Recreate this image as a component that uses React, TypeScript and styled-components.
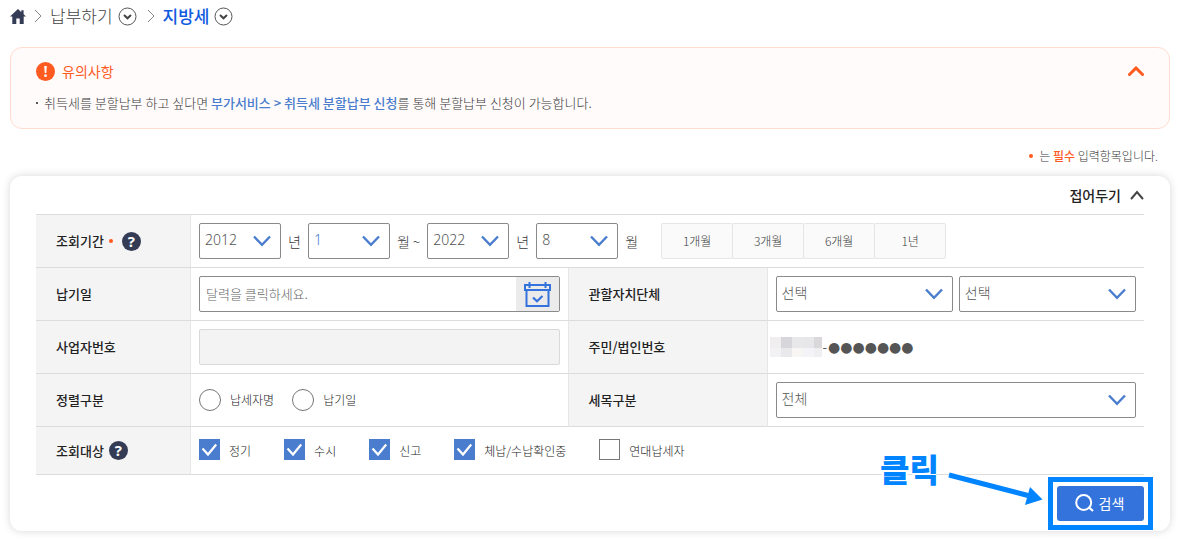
import React, { useState } from "react";
import styled, { createGlobalStyle, css } from "styled-components";

const color = {
  text: "#3a3a3a",
  strong: "#222",
  line: "#dcdcdc",
  field: "#8a8a8a",
  blue: "#4a7dce",
  primary: "#3573dc",
  navy: "#343b54",
  orange: "#ff5a1f",
  mark: "#0084ff",
};

const GlobalStyle = createGlobalStyle`
  *, *::before, *::after { box-sizing: border-box; }
  body {
    margin: 0;
    background: #fff;
    color: ${color.text};
    font: 300 13px/20px "Noto Sans CJK KR", "Noto Sans", sans-serif;
  }
  button, input, select { font: inherit; color: inherit; margin: 0; }
  button { cursor: pointer; }
  svg { display: block; flex: none; }
`;

const Page = styled.main`
  padding: 0 11px 12px 10px;
`;

/* Breadcrumb */

const Breadcrumb = styled.nav`
  display: flex;
  align-items: center;
  gap: 8px;
  height: 32px;
  margin-bottom: 15px;
`;

const CrumbLink = styled.a<{ $current?: boolean }>`
  font-size: 17px;
  line-height: 24px;
  text-decoration: none;
  color: ${(p) => (p.$current ? "#0f5be0" : "#444")};
  font-weight: ${(p) => (p.$current ? 500 : 300)};
`;

const Crumb = styled.span`
  display: flex;
  align-items: center;
  gap: 5px;
  padding-right: 2px;
`;

const IconButton = styled.button`
  display: grid;
  place-items: center;
  padding: 0;
  border: 0;
  background: none;
`;

/* Notice */

const Notice = styled.section`
  padding: 13px 25px 15px;
  border: 1px solid #ffdcd1;
  border-radius: 12px;
  background: #fffbfa;
`;

const NoticeHead = styled.div`
  display: flex;
  align-items: center;
  justify-content: space-between;
  height: 20px;
  margin-bottom: 12px;
`;

const NoticeTitle = styled.h2`
  display: flex;
  align-items: center;
  gap: 7px;
  margin: 0;
  font-size: 14px;
  font-weight: 400;
  color: ${color.orange};
`;

const NoticeList = styled.ul`
  margin: 0;
  padding: 0;
  list-style: none;
`;

const NoticeItem = styled.li`
  display: flex;
  align-items: center;
  gap: 6px;
  &::before {
    content: "";
    width: 2px;
    height: 2px;
    background: #555;
  }
`;

const NoticeLink = styled.a`
  color: ${color.blue};
  font-weight: 500;
  text-decoration: none;
`;

const RequiredNote = styled.p`
  display: flex;
  align-items: center;
  justify-content: flex-end;
  gap: 6px;
  margin: 17px 12px 10px;
  font-size: 12px;
`;

const RequiredWord = styled.strong`
  font-weight: 500;
  color: ${color.orange};
`;

const Dot = styled.i`
  width: 4px;
  height: 4px;
  border-radius: 50%;
  background: ${color.orange};
`;

/* Search card */

const Card = styled.form`
  padding: 0 26px 10px;
  border-radius: 12px;
  background: #fff;
  box-shadow: 0 0 8px rgba(0, 0, 0, 0.16);
`;

const CardHead = styled.div`
  display: flex;
  justify-content: flex-end;
  height: 38px;
`;

const FoldButton = styled(IconButton)`
  grid-auto-flow: column;
  gap: 9px;
  font-size: 14px;
  font-weight: 500;
  color: ${color.strong};
`;

const Table = styled.table`
  width: 100%;
  table-layout: fixed;
  border-spacing: 0;
  border-top: 1px solid ${color.line};
`;

const HeadCol = styled.col`
  width: 155px;
`;

const SideCol = styled.col`
  width: 200px;
`;

const Th = styled.th<{ $inner?: boolean }>`
  padding: 0 0 0 20px;
  text-align: left;
  font-weight: 500;
  color: ${color.strong};
  background: #f4f4f4;
  border-right: 1px solid #e6e6e6;
  border-bottom: 1px solid ${color.line};
  ${(p) => p.$inner && css`border-left: 1px solid #e6e6e6;`}
`;

const Td = styled.td<{ $tight?: boolean; $short?: boolean }>`
  height: ${(p) => (p.$short ? 48 : 53)}px;
  padding: 0 ${(p) => (p.$tight ? 2 : 8)}px;
  border-bottom: 1px solid ${color.line};
`;

const HeadLabel = styled.span<{ $gap: number }>`
  display: flex;
  align-items: center;
  gap: ${(p) => p.$gap}px;
`;

const HelpButton = styled.button`
  width: 19px;
  height: 19px;
  padding: 0;
  border: 0;
  border-radius: 50%;
  background: ${color.navy};
  color: #fff;
  font-family: "Noto Sans", sans-serif;
  font-size: 15px;
  font-weight: 700;
  line-height: 19px;
`;

const Row = styled.div<{ $gap?: number }>`
  display: flex;
  align-items: center;
  gap: ${(p) => p.$gap ?? 0}px;
`;

const SelectBox = styled.span<{ $narrow?: boolean }>`
  display: grid;
  align-items: center;
  ${(p) => (p.$narrow ? css`width: 82px;` : css`flex: 1;`)}
  > * { grid-area: 1 / 1; }
  > svg {
    justify-self: end;
    margin-right: 10px;
    pointer-events: none;
  }
`;

const Select = styled.select<{ $active?: boolean }>`
  appearance: none;
  width: 100%;
  height: 36px;
  padding: 0 30px 2px 5px;
  border: 1px solid ${color.field};
  border-radius: 2px;
  background: #fff;
  font-family: "Noto Sans", "Noto Sans CJK KR", sans-serif;
  font-size: 14px;
  color: ${(p) => (p.$active ? color.blue : "#555")};
`;

const Unit = styled.span`
  padding: 0 7px;
  font-size: 14px;
`;

const PeriodGroup = styled.div`
  display: flex;
  margin-left: 16px;
`;

const PeriodButton = styled.button`
  width: 72px;
  height: 36px;
  padding: 0;
  border: 1px solid #e6e6e6;
  border-radius: 2px;
  background: #fafafa;
  font-size: 12px;
  & + & { margin-left: -1px; }
`;

const DateField = styled.div`
  display: flex;
  height: 36px;
  border: 1px solid ${color.field};
  border-radius: 2px;
`;

const TextInput = styled.input`
  flex: 1;
  min-width: 0;
  padding: 0 6px;
  border: 0;
  background: none;
  &::placeholder { color: #666; opacity: 1; }
`;

const CalendarButton = styled(IconButton)`
  width: 43px;
  background: #ebebeb;
`;

const DisabledInput = styled.input`
  display: block;
  width: 100%;
  height: 36px;
  border: 1px solid #d9d9d9;
  border-radius: 2px;
  background: #f3f3f3;
`;

const Mosaic = styled.span`
  display: grid;
  grid-template-columns: 11px 11px 11px 11px 8px;
  grid-template-rows: 11px 9px;
`;

const MosaicCell = styled.i<{ $tone: string }>`
  background: ${(p) => p.$tone};
`;

const MaskedNumber = styled.span`
  display: flex;
  align-items: center;
  gap: 1px;
  color: #555;
  font-weight: 400;
`;

const MaskDots = styled.span`
  font-family: "DejaVu Sans", sans-serif;
  font-size: 14px;
`;

const Choice = styled.label`
  display: flex;
  align-items: center;
  gap: 9px;
  font-size: 12px;
  color: #222;
`;

const Radio = styled.input`
  appearance: none;
  width: 22px;
  height: 22px;
  border: 1px solid #777;
  border-radius: 50%;
  background: #fff;
  &:checked { border: 6px solid ${color.blue}; }
`;

const CheckBoxCell = styled.span`
  display: grid;
  place-items: center;
  padding-bottom: 3px;
  > * { grid-area: 1 / 1; }
  > svg { pointer-events: none; visibility: hidden; }
  > input:checked + svg { visibility: visible; }
`;

const CheckInput = styled.input`
  appearance: none;
  width: 21px;
  height: 21px;
  border: 1px solid #777;
  background: #fff;
  &:checked {
    border-color: ${color.blue};
    background: ${color.blue};
  }
`;

const CardFoot = styled.div`
  display: flex;
  justify-content: flex-end;
  padding-top: 11px;
`;

const SearchTarget = styled.div`
  position: relative;
  outline: 5px solid ${color.mark};
  outline-offset: 4px;
  box-shadow: 0 0 0 10px #fff;
`;

const SearchButton = styled.button`
  display: flex;
  align-items: center;
  justify-content: center;
  gap: 5px;
  width: 87px;
  height: 35px;
  padding: 0 2px 2px 0;
  border: 0;
  border-radius: 3px;
  background: ${color.primary};
  color: #fff;
  font-size: 14px;
  font-weight: 400;
`;

const Callout = styled.div`
  position: absolute;
  top: -38px;
  right: calc(100% + 13px);
  display: flex;
  align-items: flex-end;
  gap: 7px;
  color: ${color.mark};
  pointer-events: none;
`;

const CalloutText = styled.strong`
  padding-bottom: 18px;
  font-size: 32px;
  font-weight: 900;
  line-height: 40px;
  white-space: nowrap;
  text-shadow: 2px 0 #fff, -2px 0 #fff, 0 2px #fff, 0 -2px #fff;
`;

/* Icons */

const HomeIcon = () => (
  <svg width="16" height="15" viewBox="0 0 16 15" aria-hidden="true">
    <path
      fill={color.navy}
      d="M8 0 0 7.6h2.3V15h4V9.6h3.4V15h4V7.6H16L13.6 5.300V1.300h-2.300v1.900z"
    />
  </svg>
);

const CrumbArrow = () => (
  <svg width="8" height="14" viewBox="0 0 8 14" aria-hidden="true">
    <path d="M1 1l6 6-6 6" fill="none" stroke="#888" strokeWidth="1" />
  </svg>
);

const CircleDown = () => (
  <svg width="19" height="19" viewBox="0 0 19 19" aria-hidden="true">
    <circle cx="9.5" cy="9.5" r="8.5" fill="none" stroke="#555" />
    <path d="M6 8l3.500 3.300L13 8" fill="none" stroke="#444" strokeWidth="2" />
  </svg>
);

const AlertIcon = () => (
  <svg width="19" height="19" viewBox="0 0 19 19" aria-hidden="true">
    <circle cx="9.500" cy="9.500" r="9.500" fill={color.orange} />
    <path d="M8.200 4h2.600l-.5 7H8.700z" fill="#fff" />
    <circle cx="9.500" cy="13.700" r="1.400" fill="#fff" />
  </svg>
);

const ChevronUp = ({ w, h, tone, weight }: { w: number; h: number; tone: string; weight: number }) => (
  <svg width={w} height={h} viewBox={`0 0 ${w} ${h}`} aria-hidden="true">
    <path
      d={`M1.500 ${h - 1.5}L${w / 2} 2L${w - 1.5} ${h - 1.5}`}
      fill="none"
      stroke={tone}
      strokeWidth={weight}
      strokeLinecap="round"
    />
  </svg>
);

const ChevronDown = () => (
  <svg width="18" height="12" viewBox="0 0 18 12" aria-hidden="true">
    <path d="M1 1.500l8 8.300 8-8.300" fill="none" stroke={color.blue} strokeWidth="2.400" />
  </svg>
);

const CalendarIcon = () => (
  <svg width="27" height="27" viewBox="0 0 27 27" aria-hidden="true">
    <g fill="none" stroke={color.primary} strokeWidth="2">
      <path d="M1 4h25v5H1z" />
      <path d="M2.500 9v16h22V9" />
      <path d="M5.500 1v6M21.500 1v6" />
      <path d="M9 16.500l4 3.700 5.500-5.200" strokeWidth="2.200" />
    </g>
  </svg>
);

const CheckIcon = () => (
  <svg width="21" height="21" viewBox="0 0 21 21" aria-hidden="true">
    <path d="M3.500 9.500l5.500 6 8.200-10" fill="none" stroke="#fff" strokeWidth="2.200" />
  </svg>
);

const SearchIcon = () => (
  <svg width="19" height="18" viewBox="0 0 19 18" aria-hidden="true">
    <circle cx="8.700" cy="8.500" r="7.500" fill="none" stroke="#fff" strokeWidth="2" />
    <path d="M13.500 13l4.500 4" stroke="#fff" strokeWidth="2.200" />
  </svg>
);

const ArrowIcon = () => (
  <svg width="98" height="36" viewBox="0 0 98 36" aria-hidden="true">
    <path d="M3 5l79 20" stroke="#fff" strokeWidth="9" />
    <path d="M3 5l79 20.500" stroke={color.mark} strokeWidth="5" />
    <path d="M84 17l12.500 12.500L79 35z" fill={color.mark} />
  </svg>
);

/* Parts */

function Dropdown(props: { label: string; options: string[]; narrow?: boolean; active?: boolean; id?: string }) {
  return (
    <SelectBox $narrow={props.narrow}>
      <Select id={props.id} aria-label={props.label} $active={props.active}>
        {props.options.map((o) => (
          <option key={o}>{o}</option>
        ))}
      </Select>
      <ChevronDown />
    </SelectBox>
  );
}

function Check({ label, on }: { label: string; on?: boolean }) {
  return (
    <Choice>
      <CheckBoxCell>
        <CheckInput type="checkbox" defaultChecked={on} />
        <CheckIcon />
      </CheckBoxCell>
      {label}
    </Choice>
  );
}

const mosaicTones = [
  "#f0eeee", "#d7d7db", "#e8e8eb", "#e7e7ea", "#dad8db",
  "#f2f1f3", "#e9e8ea", "#f7f6f5", "#f4f4f8", "#efeff1",
];

export default function App() {
  const [noticeOpen, setNoticeOpen] = useState(true);

  return (
    <>
      <GlobalStyle />
      <Page>
        <Breadcrumb aria-label="현재 위치">
          <a href="#home" aria-label="홈"><HomeIcon /></a>
          <CrumbArrow />
          <Crumb>
            <CrumbLink href="#pay">납부하기</CrumbLink>
            <IconButton type="button" aria-label="납부하기 메뉴"><CircleDown /></IconButton>
          </Crumb>
          <CrumbArrow />
          <Crumb>
            <CrumbLink href="#local" $current>지방세</CrumbLink>
            <IconButton type="button" aria-label="지방세 메뉴"><CircleDown /></IconButton>
          </Crumb>
        </Breadcrumb>

        <Notice>
          <NoticeHead>
            <NoticeTitle><AlertIcon />유의사항</NoticeTitle>
            <IconButton type="button" aria-label="유의사항 접기" onClick={() => setNoticeOpen(!noticeOpen)}>
              <ChevronUp w={16} h={10} tone={color.orange} weight={3} />
            </IconButton>
          </NoticeHead>
          {noticeOpen && (
            <NoticeList>
              <NoticeItem>
                <span>
                  취득세를 분할납부 하고 싶다면{" "}
                  <NoticeLink href="#split">부가서비스 &gt; 취득세 분할납부 신청</NoticeLink>
                  를 통해 분할납부 신청이 가능합니다.
                </span>
              </NoticeItem>
            </NoticeList>
          )}
        </Notice>

        <RequiredNote>
          <Dot />
          <span>는 <RequiredWord>필수</RequiredWord> 입력항목입니다.</span>
        </RequiredNote>

        <Card onSubmit={(e) => e.preventDefault()}>
          <CardHead>
            <FoldButton type="button">
              접어두기
              <ChevronUp w={14} h={10} tone="#444" weight={2} />
            </FoldButton>
          </CardHead>

          <Table>
            <colgroup>
              <HeadCol />
              <col />
              <SideCol />
              <col />
            </colgroup>
            <tbody>
              <tr>
                <Th scope="row">
                  <HeadLabel $gap={9}>
                    <HeadLabel $gap={5}>조회기간<Dot /></HeadLabel>
                    <HelpButton type="button" aria-label="조회기간 도움말">?</HelpButton>
                  </HeadLabel>
                </Th>
                <Td colSpan={3}>
                  <Row>
                    <Dropdown narrow label="시작 연도" options={["2012", "2013"]} />
                    <Unit>년</Unit>
                    <Dropdown narrow active label="시작 월" options={["1", "2"]} />
                    <Unit>월 ~</Unit>
                    <Dropdown narrow label="종료 연도" options={["2022", "2021"]} />
                    <Unit>년</Unit>
                    <Dropdown narrow label="종료 월" options={["8", "9"]} />
                    <Unit>월</Unit>
                    <PeriodGroup>
                      {["1개월", "3개월", "6개월", "1년"].map((p) => (
                        <PeriodButton type="button" key={p}>{p}</PeriodButton>
                      ))}
                    </PeriodGroup>
                  </Row>
                </Td>
              </tr>
              <tr>
                <Th scope="row"><label htmlFor="due">납기일</label></Th>
                <Td>
                  <DateField>
                    <TextInput id="due" type="text" placeholder="달력을 클릭하세요." />
                    <CalendarButton type="button" aria-label="달력 열기"><CalendarIcon /></CalendarButton>
                  </DateField>
                </Td>
                <Th scope="row" $inner>관할자치단체</Th>
                <Td>
                  <Row $gap={6}>
                    <Dropdown label="시도" options={["선택"]} />
                    <Dropdown label="시군구" options={["선택"]} />
                  </Row>
                </Td>
              </tr>
              <tr>
                <Th scope="row"><label htmlFor="biz">사업자번호</label></Th>
                <Td><DisabledInput id="biz" type="text" disabled /></Td>
                <Th scope="row" $inner>주민/법인번호</Th>
                <Td $tight>
                  <MaskedNumber>
                    <Mosaic aria-hidden="true">
                      {mosaicTones.map((t, i) => <MosaicCell key={i} $tone={t} />)}
                    </Mosaic>
                    <span>-</span>
                    <MaskDots>●●●●●●●</MaskDots>
                  </MaskedNumber>
                </Td>
              </tr>
              <tr>
                <Th scope="row">정렬구분</Th>
                <Td>
                  <Row $gap={18}>
                    <Choice><Radio type="radio" name="sort" />납세자명</Choice>
                    <Choice><Radio type="radio" name="sort" />납기일</Choice>
                  </Row>
                </Td>
                <Th scope="row" $inner><label htmlFor="tax">세목구분</label></Th>
                <Td><Row><Dropdown id="tax" label="세목구분" options={["전체"]} /></Row></Td>
              </tr>
              <tr>
                <Th scope="row">
                  <HeadLabel $gap={5}>
                    조회대상
                    <HelpButton type="button" aria-label="조회대상 도움말">?</HelpButton>
                  </HeadLabel>
                </Th>
                <Td colSpan={3} $short>
                  <Row $gap={33}>
                    <Check on label="정기" />
                    <Check on label="수시" />
                    <Check on label="신고" />
                    <Check on label="체납/수납확인중" />
                    <Check label="연대납세자" />
                  </Row>
                </Td>
              </tr>
            </tbody>
          </Table>

          <CardFoot>
            <SearchTarget>
              <SearchButton type="submit"><SearchIcon />검색</SearchButton>
              <Callout>
                <CalloutText>클릭</CalloutText>
                <ArrowIcon />
              </Callout>
            </SearchTarget>
          </CardFoot>
        </Card>
      </Page>
    </>
  );
}
